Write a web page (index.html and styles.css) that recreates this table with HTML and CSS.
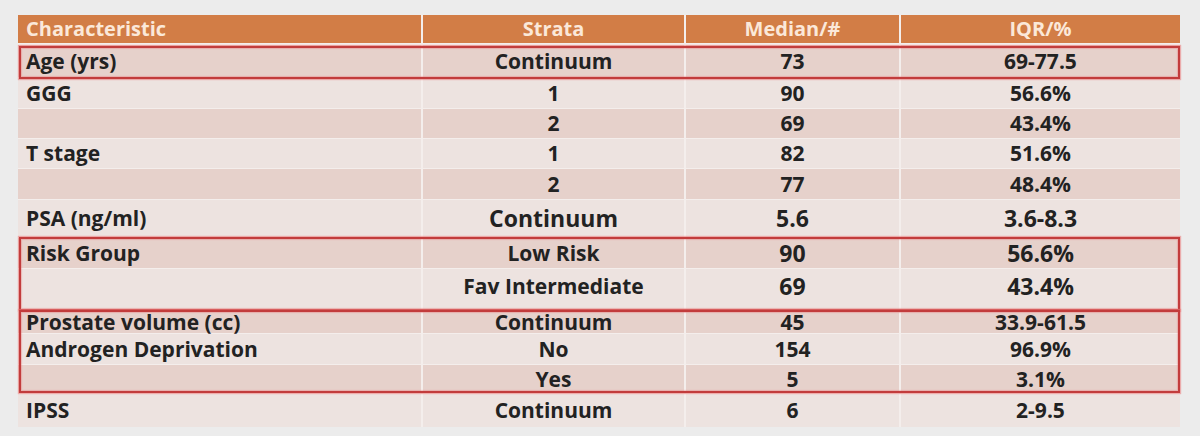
FILE: index.html
```html
<!DOCTYPE html>
<html>
<head>
<meta charset="utf-8">
<link rel="stylesheet" href="styles.css">
</head>
<body>
<div class="page">
  <div class="table">
    <div class="row head">
      <div class="cell left">Characteristic</div>
      <div class="cell">Strata</div>
      <div class="cell">Median/#</div>
      <div class="cell">IQR/%</div>
    </div>
    <div class="group g-age">
      <div class="row dark h32">
        <div class="cell left">Age (yrs)</div>
        <div class="cell">Continuum</div>
        <div class="cell">73</div>
        <div class="cell">69-77.5</div>
      </div>
    </div>
    <div class="row light h30">
      <div class="cell left">GGG</div>
      <div class="cell">1</div>
      <div class="cell">90</div>
      <div class="cell">56.6%</div>
    </div>
    <div class="row dark h29">
      <div class="cell left"></div>
      <div class="cell">2</div>
      <div class="cell">69</div>
      <div class="cell">43.4%</div>
    </div>
    <div class="row light h29">
      <div class="cell left">T stage</div>
      <div class="cell">1</div>
      <div class="cell">82</div>
      <div class="cell">51.6%</div>
    </div>
    <div class="row dark h30">
      <div class="cell left"></div>
      <div class="cell">2</div>
      <div class="cell">77</div>
      <div class="cell">48.4%</div>
    </div>
    <div class="row light h37">
      <div class="cell left">PSA (ng/ml)</div>
      <div class="cell big">Continuum</div>
      <div class="cell big">5.6</div>
      <div class="cell big">3.6-8.3</div>
    </div>
    <div class="group g-risk">
      <div class="row dark h30">
        <div class="cell left">Risk Group</div>
        <div class="cell">Low Risk</div>
        <div class="cell big">90</div>
        <div class="cell big">56.6%</div>
      </div>
      <div class="row light h41 raise">
        <div class="cell left"></div>
        <div class="cell">Fav Intermediate</div>
        <div class="cell big">69</div>
        <div class="cell big">43.4%</div>
      </div>
    </div>
    <div class="group g-pros">
      <div class="row dark h22">
        <div class="cell left">Prostate volume (cc)</div>
        <div class="cell">Continuum</div>
        <div class="cell">45</div>
        <div class="cell">33.9-61.5</div>
      </div>
      <div class="row light h30">
        <div class="cell left">Androgen Deprivation</div>
        <div class="cell">No</div>
        <div class="cell">154</div>
        <div class="cell">96.9%</div>
      </div>
      <div class="row dark h28">
        <div class="cell left"></div>
        <div class="cell">Yes</div>
        <div class="cell">5</div>
        <div class="cell">3.1%</div>
      </div>
    </div>
    <div class="row light h33">
      <div class="cell left">IPSS</div>
      <div class="cell">Continuum</div>
      <div class="cell">6</div>
      <div class="cell">2-9.5</div>
    </div>
  </div>
</div>
</body>
</html>
```
FILE: styles.css
```css
html, body {
  margin: 0;
  padding: 0;
  background: #ececec;
}
.page {
  width: 1200px;
  height: 436px;
  box-sizing: border-box;
  padding: 15px 20px 0 18px;
  font-family: "Open Sans", Lato, "Liberation Sans", sans-serif;
  font-weight: 700;
  color: #222;
}
.table {
  width: 1162px;
  background: #f4eeec;
  display: flex;
  flex-direction: column;
  gap: 1px;
}
.group {
  position: relative;
  display: flex;
  flex-direction: column;
  gap: 1px;
}
.group::after {
  content: "";
  position: absolute;
  left: 1px;
  right: 0;
  border: 2px solid #c23c3c;
  box-shadow: 0 0 1px 1px rgba(235, 120, 120, 0.55), inset 0 0 1px 1px rgba(235, 120, 120, 0.4);
  pointer-events: none;
}
.g-age::after { top: 1px; bottom: -2px; }
.g-risk::after { top: -1px; bottom: -1px; }
.g-pros::after { top: -1px; bottom: 0; }
.row {
  display: grid;
  grid-template-columns: 403px 261px 213px 279px;
  column-gap: 2px;
  font-size: 21px;
}
.cell {
  display: flex;
  align-items: center;
  justify-content: center;
  white-space: nowrap;
  line-height: 1;
}
.cell.left {
  justify-content: flex-start;
  padding-left: 8px;
}
.head {
  height: 28px;
  margin-bottom: 1px;
}
.head .cell {
  background: #d27d46;
  color: #fbe8d9;
  font-size: 20px;
}
.dark .cell { background: #e6d1cb; }
.light .cell { background: #ede3e0; }
.big { font-size: 23px; }
.raise .cell { padding-bottom: 6px; }
.raise .cell.left { padding-bottom: 0; }
.h22 { height: 22px; }
.h28 { height: 28px; }
.h29 { height: 29px; }
.h30 { height: 30px; }
.h32 { height: 32px; }
.h33 { height: 33px; }
.h37 { height: 37px; }
.h41 { height: 41px; }
```
